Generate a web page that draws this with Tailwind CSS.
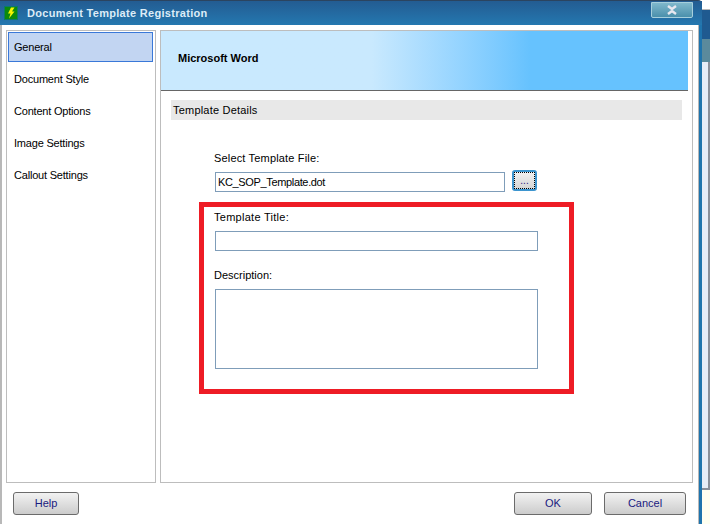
<!DOCTYPE html>
<html><head><meta charset="utf-8"><script src="https://cdn.jsdelivr.net/npm/@tailwindcss/browser@4"></script></head>
<body class="m-0 overflow-hidden bg-white">
<div class="relative w-[717px] h-[524px] flex font-['Liberation_Sans',sans-serif] text-[11px] text-black bg-white">
  <div class="w-[702px] h-[524px] shrink-0 flex flex-col bg-[#1f74ad] rounded-tr-[4px] border-t border-[#2b4460] box-border">
    <div class="h-[24px] shrink-0 flex items-center bg-gradient-to-b from-[#235c92] to-[#2478b0] pl-[4px] relative">
      <svg class="w-[14px] h-[14px] shrink-0" viewBox="0 0 14 14"><rect width="14" height="14" fill="#0a7a6a"/><rect x="1" y="1" width="12" height="12" fill="#0c8a0c"/><path d="M7 1.500h3.500L8 5.500h2.500L5 12.500l1.500-5H4z" fill="#f8f400"/></svg>
      <span class="ml-[9px] text-[#dcecf7] text-[11px] font-bold tracking-[0.3px]">Document Template Registration</span>
      <div class="absolute right-[9px] top-[1px] w-[42px] h-[16px] flex items-center justify-center bg-gradient-to-b from-[#7fb8cc] to-[#4a90ac] border border-[#a6cfdc] rounded-b-[2px]">
        <svg class="w-[12px] h-[10px]" viewBox="0 0 12 10"><path d="M2 1l4 3 4-3M2 9l4-3 4 3" fill="none" stroke="#e8e8f0" stroke-width="2.400"/></svg>
      </div>
    </div>
    <div class="flex-1 w-[699px] bg-white flex flex-col border-l-2 border-r border-[#b8b8b8] pl-[4px] pr-[5px] pt-[5px] box-border">
      <div class="flex gap-[4px] h-[453px] shrink-0">
        <div class="w-[150px] shrink-0 border border-[#bdbdbd] flex flex-col box-border tracking-[-0.2px]">
          <div class="h-[30px] mt-[1px] ml-[1px] mr-[2px] mb-[1px] flex items-center pl-[5px] bg-[#c2d5f2] border border-[#3a78d8] box-border">General</div>
          <div class="h-[32px] flex items-center pl-[7px]">Document Style</div>
          <div class="h-[32px] flex items-center pl-[7px]">Content Options</div>
          <div class="h-[32px] flex items-center pl-[7px]">Image Settings</div>
          <div class="h-[32px] flex items-center pl-[7px]">Callout Settings</div>
        </div>
        <div class="flex-1 border border-[#bdbdbd] flex flex-col box-border">
          <div class="h-[60px] shrink-0 mr-[4px] flex items-center pl-[17px] pb-[4px] font-bold bg-gradient-to-r from-[#c9e9fe] from-[40%] to-[#66c2fe] to-[70%] border-b border-[#666666] box-border">Microsoft Word</div>
          <div class="h-[20px] mt-[9px] mx-[10px] bg-[#e8e8e8] flex items-center pl-[2px] shrink-0 tracking-[0.2px]">Template Details</div>
          <div class="ml-[53px] mt-[31px] flex flex-col">
            <div class="h-[14px] flex items-center tracking-[0.17px]">Select Template File:</div>
            <div class="flex items-start mt-[7px] ml-[1px] h-[20px]">
              <div class="w-[290px] h-[20px] border border-[#7f9db9] flex items-center pl-[2px] box-border tracking-[-0.35px]">KC_SOP_Template.dot</div>
              <div class="ml-[7px] -mt-[2px] w-[25px] h-[21px] flex items-center justify-center rounded-[3px] border-2 border-[#3d95cf] bg-gradient-to-b from-[#f2f2f2] to-[#d4d4d4] box-border">
                <div class="w-full h-full border border-dotted border-black flex items-center justify-center text-[#2a1a80] leading-none text-[10px]">...</div>
              </div>
            </div>
            <div class="h-[14px] flex items-center mt-[18px] tracking-[0.27px]">Template Title:</div>
            <div class="w-[323px] h-[20px] border border-[#7f9db9] mt-[7px] ml-[1px] box-border"></div>
            <div class="h-[14px] flex items-center mt-[17px]">Description:</div>
            <div class="w-[323px] h-[80px] border border-[#7f9db9] mt-[7px] ml-[1px] box-border"></div>
          </div>
        </div>
      </div>
      <div class="flex justify-between mt-[9px] pl-[7px] pr-[7px]">
        <div class="w-[66px] h-[23px] flex items-center justify-center rounded-[3px] border border-[#6b6b6b] bg-gradient-to-b from-[#f2f2f2] to-[#cccccc] text-[#1a1a80] box-border">Help</div>
        <div class="flex gap-[12px]">
          <div class="w-[78px] h-[23px] flex items-center justify-center rounded-[3px] border border-[#6b6b6b] bg-gradient-to-b from-[#f2f2f2] to-[#cccccc] text-[#1a1a80] box-border">OK</div>
          <div class="w-[82px] h-[23px] flex items-center justify-center rounded-[3px] border border-[#6b6b6b] bg-gradient-to-b from-[#f2f2f2] to-[#cccccc] text-[#1a1a80] box-border">Cancel</div>
        </div>
      </div>
    </div>
  </div>
  <div class="w-[8px] shrink-0 flex flex-col pt-[9px]">
    <div class="h-[30px] bg-[#1f5a90] border-t border-[#b8b8b8] box-border"></div>
    <div class="h-[23px] bg-[#5b8a9c]"></div>
    <div class="h-[428px] bg-[#e6ecf7] border-r-2 border-b-2 border-[#8a8f9a] box-border"></div>
    <div class="flex-1 bg-[#fffff0]"></div>
  </div>
  <div class="absolute left-[199px] top-[202px] w-[375px] h-[192px] border-[5px] border-[#ee1c25] box-border"></div>
</div>
</body></html>
